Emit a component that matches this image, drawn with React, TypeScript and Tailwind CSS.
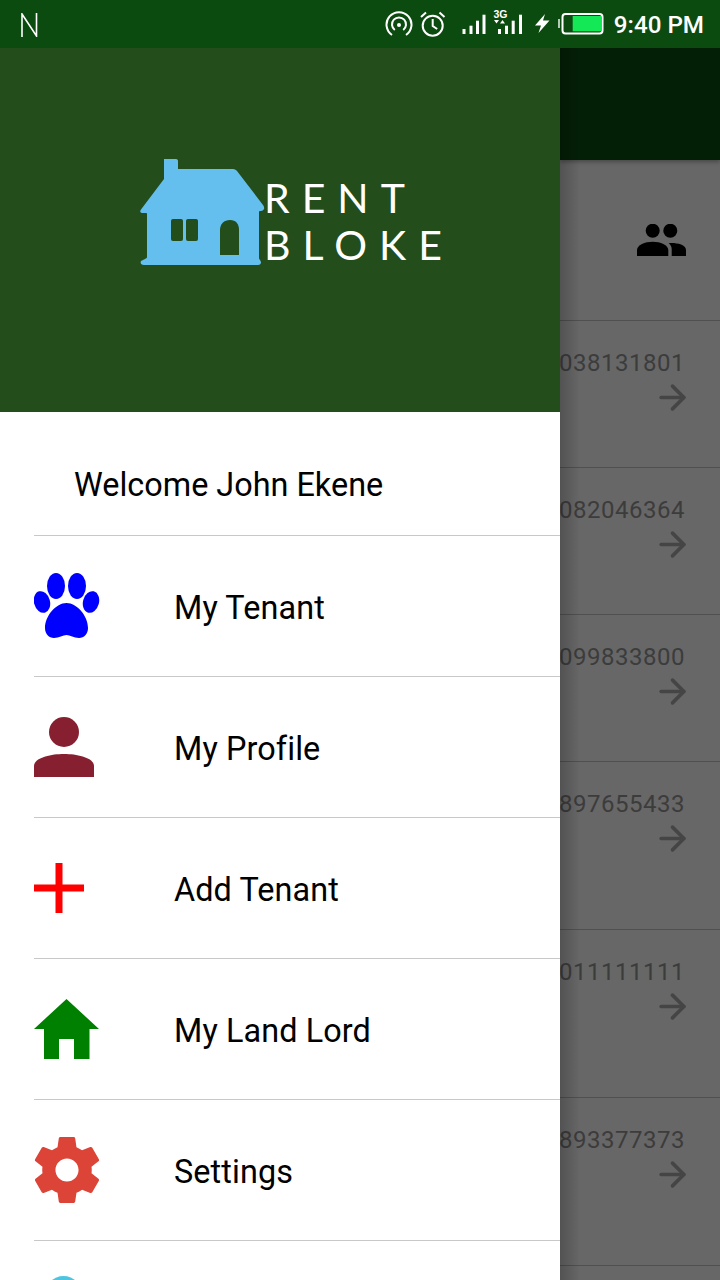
import { ArrowRight } from 'lucide-react';

const gearPath =
  'M19.43 12.98c.04-.32.07-.64.07-.98s-.03-.66-.07-.98l2.11-1.65c.19-.15.24-.42.12-.64l-2-3.46c-.12-.22-.39-.3-.61-.22l-2.49 1c-.52-.4-1.08-.73-1.69-.98l-.38-2.65C14.46 2.18 14.25 2 14 2h-4c-.25 0-.46.18-.49.42l-.38 2.65c-.61.25-1.17.59-1.69.98l-2.49-1c-.23-.09-.49 0-.61.22l-2 3.46c-.13.22-.07.49.12.64l2.11 1.65c-.04.32-.07.65-.07.98s.03.66.07.98l-2.11 1.65c-.19.15-.24.42-.12.64l2 3.46c.12.22.39.3.61.22l2.49-1c.52.4 1.08.73 1.69.98l.38 2.65c.03.24.24.42.49.42h4c.25 0 .46-.18.49-.42l.38-2.65c.61-.25 1.17-.59 1.69-.98l2.49 1c.23.09.49 0 .61-.22l2-3.46c.12-.22.07-.49-.12-.64l-2.11-1.65zM12 15.5c-1.93 0-3.5-1.57-3.5-3.5s1.57-3.5 3.5-3.5 3.5 1.57 3.5 3.5-1.57 3.5-3.5 3.5z';

function PawIcon() {
  return (
    <svg width="66" height="66" viewBox="0 0 66 66">
      <g fill="#0000ff">
        <ellipse cx="8" cy="29" rx="8" ry="11" transform="rotate(-15 8 29)" />
        <ellipse cx="22" cy="13" rx="9" ry="13" />
        <ellipse cx="43" cy="13" rx="9" ry="13" />
        <ellipse cx="57" cy="29" rx="8" ry="11" transform="rotate(15 57 29)" />
        <path d="M32.500 30C22 30 11 43 11 55c0 6 4 10 9 10 5 0 9-3 12.500-3S40 65 45 65c5 0 9-4 9-10 0-12-11-25-21.500-25z" />
      </g>
    </svg>
  );
}

function PersonIcon() {
  return (
    <svg width="60" height="60" viewBox="0 0 60 60">
      <circle cx="30" cy="15" r="15" fill="#861f2f" />
      <path d="M0 60V49C0 41 16 37 30 37s30 4 30 12v11z" fill="#861f2f" />
    </svg>
  );
}

function PlusIcon() {
  return (
    <svg width="50" height="50" viewBox="0 0 50 50">
      <path d="M21.500 0h7v21.500H50v7H28.500V50h-7V28.500H0v-7h21.500z" fill="#ff0000" />
    </svg>
  );
}

function HomeIcon() {
  return (
    <svg width="65" height="60" viewBox="0 0 65 60">
      <path d="M32.500 0L65 30H55.500V60H40V40H25V60H10V30H0z" fill="#008000" />
    </svg>
  );
}

function GearIcon() {
  return (
    <svg width="66" height="66" viewBox="2.100 2 19.800 20">
      <path d={gearPath} fill="#db4437" />
    </svg>
  );
}

const menuItems = [
  { label: 'My Tenant', icon: <PawIcon /> },
  { label: 'My Profile', icon: <PersonIcon /> },
  { label: 'Add Tenant', icon: <PlusIcon /> },
  { label: 'My Land Lord', icon: <HomeIcon /> },
  { label: 'Settings', icon: <GearIcon /> },
];

const tenantRows = [
  { phone: '038131801', height: 'h-[147px]' },
  { phone: '082046364', height: 'h-[147px]' },
  { phone: '099833800', height: 'h-[147px]' },
  { phone: '897655433', height: 'h-[168px]' },
  { phone: '011111111', height: 'h-[168px]' },
  { phone: '893377373', height: 'h-[168px]' },
];

// drawn with x measured from the left edge of the svg (page x 385)
function StatusIcons() {
  return (
    <svg width="225" height="48" viewBox="0 0 225 48" className="shrink-0">
      {/* hotspot */}
      <g fill="none" stroke="#fff" strokeWidth="2">
        <path d="M7 35a12.500 12.500 0 1 1 14 0" />
        <path d="M9.800 30a7 7 0 1 1 8.400 0" />
      </g>
      <circle cx="14" cy="25" r="2" fill="#fff" />
      {/* alarm */}
      <g fill="none" stroke="#fff" strokeWidth="2">
        <circle cx="47.700" cy="25.700" r="10" />
        <path d="M47.700 19v7l4.500 3" />
        <path d="M36 17l5-4.500M59.500 17l-5-4.500" />
      </g>
      {/* sim 1 */}
      <g fill="#fff">
        <rect x="77.500" y="29" width="3" height="5" />
        <rect x="84.500" y="25.700" width="3" height="8.300" />
        <rect x="91" y="20.700" width="3" height="13.300" />
        <rect x="97.500" y="14.700" width="3" height="19.300" />
      </g>
      {/* sim 2 with 3G */}
      <g fill="#fff">
        <text x="108.500" y="18" fontFamily="'Liberation Sans', sans-serif" fontWeight="700" fontSize="10.500">3G</text>
        <path d="M109 20h5l-2.500 3.500zM115 23.500l2.500-3.500 2.500 3.500z" />
        <rect x="113" y="29" width="3" height="5" />
        <rect x="120" y="25.700" width="3" height="8.300" />
        <rect x="126.700" y="20.700" width="3" height="13.300" />
        <rect x="134" y="14.700" width="3" height="19.300" />
      </g>
      {/* charging bolt */}
      <path d="M160 14l-10 11.500h6L153.500 33l11-12.500h-6.500L160 14z" fill="#fff" />
      {/* battery */}
      <rect x="173" y="19" width="2" height="9" fill="#fff" fillOpacity="0.7" />
      <rect x="177.500" y="14" width="40" height="19.500" rx="3" fill="none" stroke="#fff" strokeWidth="2" />
      <rect x="187.700" y="16" width="28.300" height="15.300" fill="#14e856" />
    </svg>
  );
}

export default function App() {
  return (
    <div className="w-[720px] h-[1280px] overflow-hidden flex flex-col bg-[#676767] font-['Roboto',sans-serif]">
      <div className="h-12 shrink-0 bg-[#0c4b10] flex items-center pl-[21px] pr-[16px]">
        <svg width="18" height="24" viewBox="0 0 18 24" className="mt-[2px]">
          <path d="M1 24V1L15.500 23V0" fill="none" stroke="#fff" strokeWidth="1.600" />
        </svg>
        <div className="flex-1" />
        <StatusIcons />
        <span className="ml-[4px] mt-[2px] text-[24.200px] font-medium text-white leading-none">9:40 PM</span>
      </div>

      <div className="flex-1 flex min-h-0">
        <div className="w-[560px] shrink-0 flex flex-col bg-white relative z-10">
          <div className="h-[364px] shrink-0 bg-[#234d1a] flex items-start pl-[140px] pt-[110px]">
            <svg width="125" height="108" viewBox="0 0 125 108" className="shrink-0">
              <path
                d="M24 1h12c1.500 0 2 1 2 2v8h55c2 0 3 1 4 2l26 34c1 1.500 1.500 3 1 4-.5 1-2 2-3 2h-1c-.5 0-1 .5-1 1v46c0 1 1 2 1 2l1 2c0 2-1 3-3 3H4c-3 0-4-2-3-4l4-2c1-.5 2-1 2-2V56c0-1-.5-1-1-1H2c-1.500 0-2.500-1.500-1-3.500L24 21V3c0-1.500 0-2 0-2z"
                fill="#65bfee"
              />
              <rect x="31" y="61" width="12" height="22" rx="2" fill="#234d1a" />
              <rect x="46" y="61" width="12" height="22" rx="2" fill="#234d1a" />
              <path d="M80 97V72c0-6 4-10 10-10s9 4 9 10v25z" fill="#234d1a" />
            </svg>
            <div className="ml-[-1px] pt-[16px] font-['Lato',sans-serif] font-normal text-white text-[41px] leading-[47px] tracking-[12px]">
              <div>RENT</div>
              <div>BLOKE</div>
            </div>
          </div>

          <div className="h-[124px] shrink-0 pl-[34px]">
            <div className="h-full flex items-center pl-[40px] pt-[23px] border-b border-[#c8c8c8] text-[32.400px] text-black">
              Welcome John Ekene
            </div>
          </div>

          {menuItems.map((item) => (
            <div key={item.label} className="h-[141px] shrink-0 pl-[34px]">
              <div className="h-full flex items-center border-b border-[#c8c8c8]">
                <div className="w-[140px] shrink-0 flex items-center">{item.icon}</div>
                <span className="pt-[4px] text-[32.400px] tracking-[0.1px] text-black">{item.label}</span>
              </div>
            </div>
          ))}

          <div className="pl-[45px] pt-[35px]">
            <div className="w-[37px] h-[37px] rounded-full bg-[#4dc4e0]" />
          </div>
        </div>

        <div className="flex-1 min-w-0 relative overflow-hidden flex flex-col">
          <div className="absolute inset-y-0 left-0 w-[20px] bg-gradient-to-r from-black/20 to-transparent z-10" />
          <div className="h-[112px] shrink-0 bg-[#031f06] shadow-[0_2px_4px_rgba(0,0,0,0.3)]" />
          <div className="h-[161px] shrink-0 border-b border-[#505050] flex justify-end items-start pr-[34px] pt-[64px]">
            <svg width="49" height="32" viewBox="0 0 49 32">
              <circle cx="15.700" cy="6.700" r="7" fill="#000" />
              <circle cx="33.300" cy="6.700" r="7" fill="#000" />
              <path d="M0 32V26c0-5 8-8.300 15.700-8.300S31.300 21 31.300 26v6z" fill="#000" />
              <path d="M34.700 32V25c0-2-1-4-3-5.700 1-.2 2-.2 3-.2 6 0 14.300 1.900 14.300 7v6.900z" fill="#000" />
            </svg>
          </div>
          {tenantRows.map((row) => (
            <div key={row.phone} className={`${row.height} shrink-0 border-b border-[#505050] flex flex-col items-end pr-[35px] pt-[26px]`}>
              <span className="text-[24px] leading-[32px] tracking-[0.5px] text-[#3c3c3c] whitespace-nowrap">{row.phone}</span>
              <ArrowRight size={39} strokeWidth={2.200} className="text-[#454545] -mr-[7px] -mt-[1px]" />
            </div>
          ))}
        </div>
      </div>
    </div>
  );
}
